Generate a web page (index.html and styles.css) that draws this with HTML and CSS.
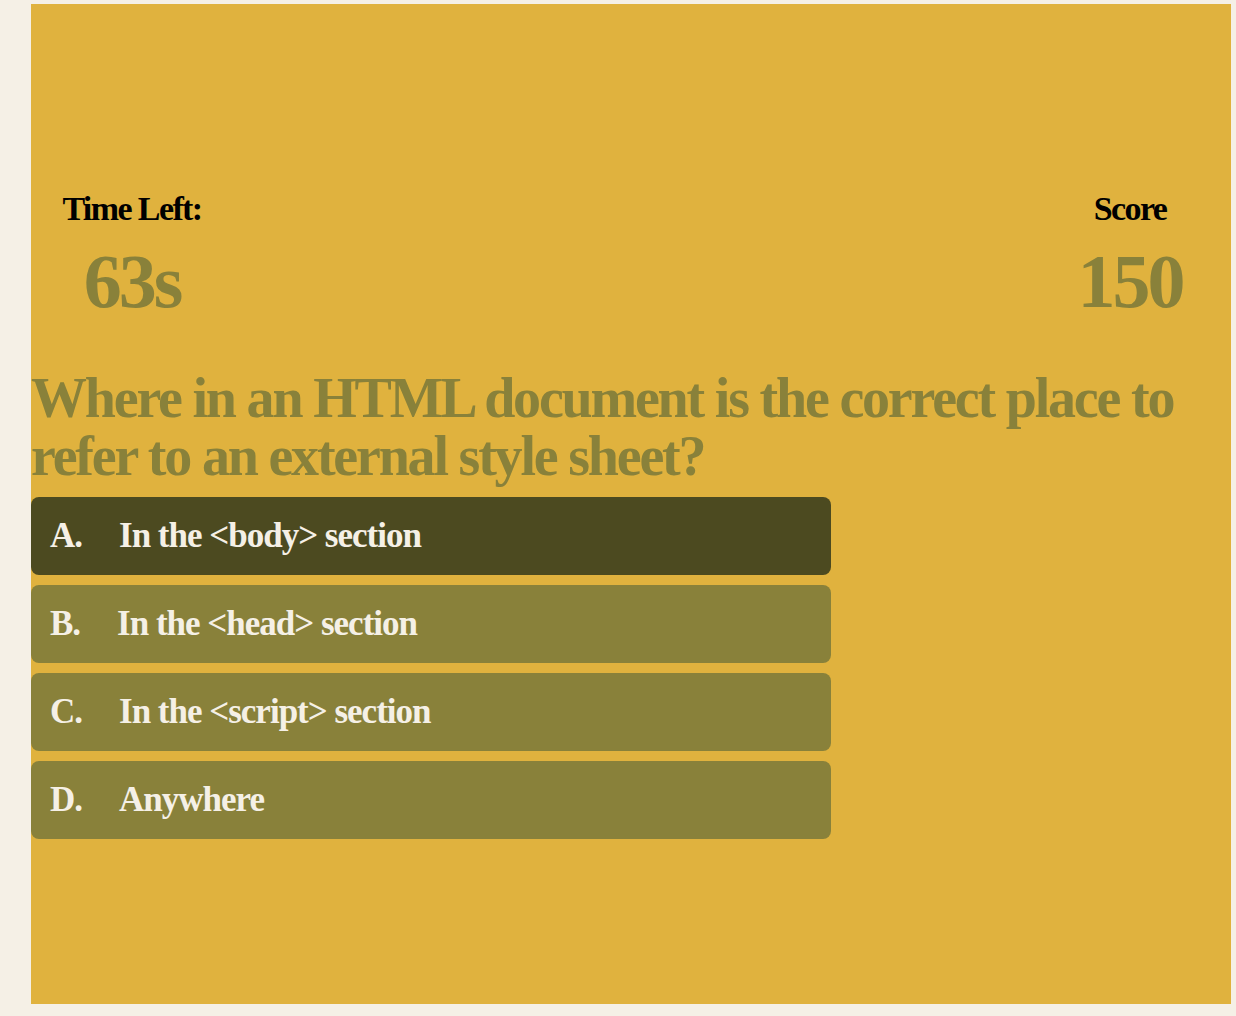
FILE: index.html
```html
<!DOCTYPE html>
<html lang="en">
<head>
<meta charset="utf-8">
<title>Quiz</title>
<link rel="stylesheet" href="styles.css">
</head>
<body>
<main class="quiz">
  <header class="stats">
    <div class="stat">
      <div class="stat-label">Time Left:</div>
      <div class="stat-value">63s</div>
    </div>
    <div class="stat">
      <div class="stat-label">Score</div>
      <div class="stat-value">150</div>
    </div>
  </header>
  <h1 class="question">Where in an HTML document is the correct place to refer to an external style sheet?</h1>
  <ul class="answers">
    <li class="answer answer-selected"><span class="letter">A.</span><span class="text">In the &lt;body&gt; section</span></li>
    <li class="answer"><span class="letter">B.</span><span class="text">In the &lt;head&gt; section</span></li>
    <li class="answer"><span class="letter">C.</span><span class="text">In the &lt;script&gt; section</span></li>
    <li class="answer"><span class="letter">D.</span><span class="text">Anywhere</span></li>
  </ul>
</main>
</body>
</html>
```

FILE: styles.css
```css
html, body {
  margin: 0;
  padding: 0;
}
body {
  background: #f5f0e6;
  font-family: "Liberation Serif", "DejaVu Serif", serif;
  font-weight: 700;
}
.quiz {
  box-sizing: border-box;
  width: 1200px;
  height: 1000px;
  margin: 4px 0 0 31px;
  background: #e0b23e;
  padding-top: 185px;
}
.stats {
  display: flex;
  justify-content: space-between;
  padding: 0 31px;
}
.stat {
  width: 140px;
  text-align: center;
  white-space: nowrap;
}
.stat-label {
  font-size: 34px;
  line-height: 40px;
  letter-spacing: -1.6px;
  color: #000;
}
.stat-value {
  margin-top: 10px;
  font-size: 76px;
  line-height: 84px;
  letter-spacing: -3px;
  color: #89813a;
}
.question {
  margin: 46px 0 12px;
  font-size: 56px;
  line-height: 58px;
  letter-spacing: -2.2px;
  color: #89813a;
  font-weight: 700;
}
.answers {
  list-style: none;
  margin: 0;
  padding: 0;
  width: 800px;
  display: flex;
  flex-direction: column;
  gap: 10px;
}
.answer {
  display: flex;
  align-items: center;
  height: 78px;
  padding-left: 19px;
  border-radius: 8px;
  background: #89813a;
  color: #f5f0e6;
  font-size: 35px;
  letter-spacing: -1px;
}
.answer-selected {
  background: #4c4a20;
}
.letter {
  margin-right: 37px;
}
```
